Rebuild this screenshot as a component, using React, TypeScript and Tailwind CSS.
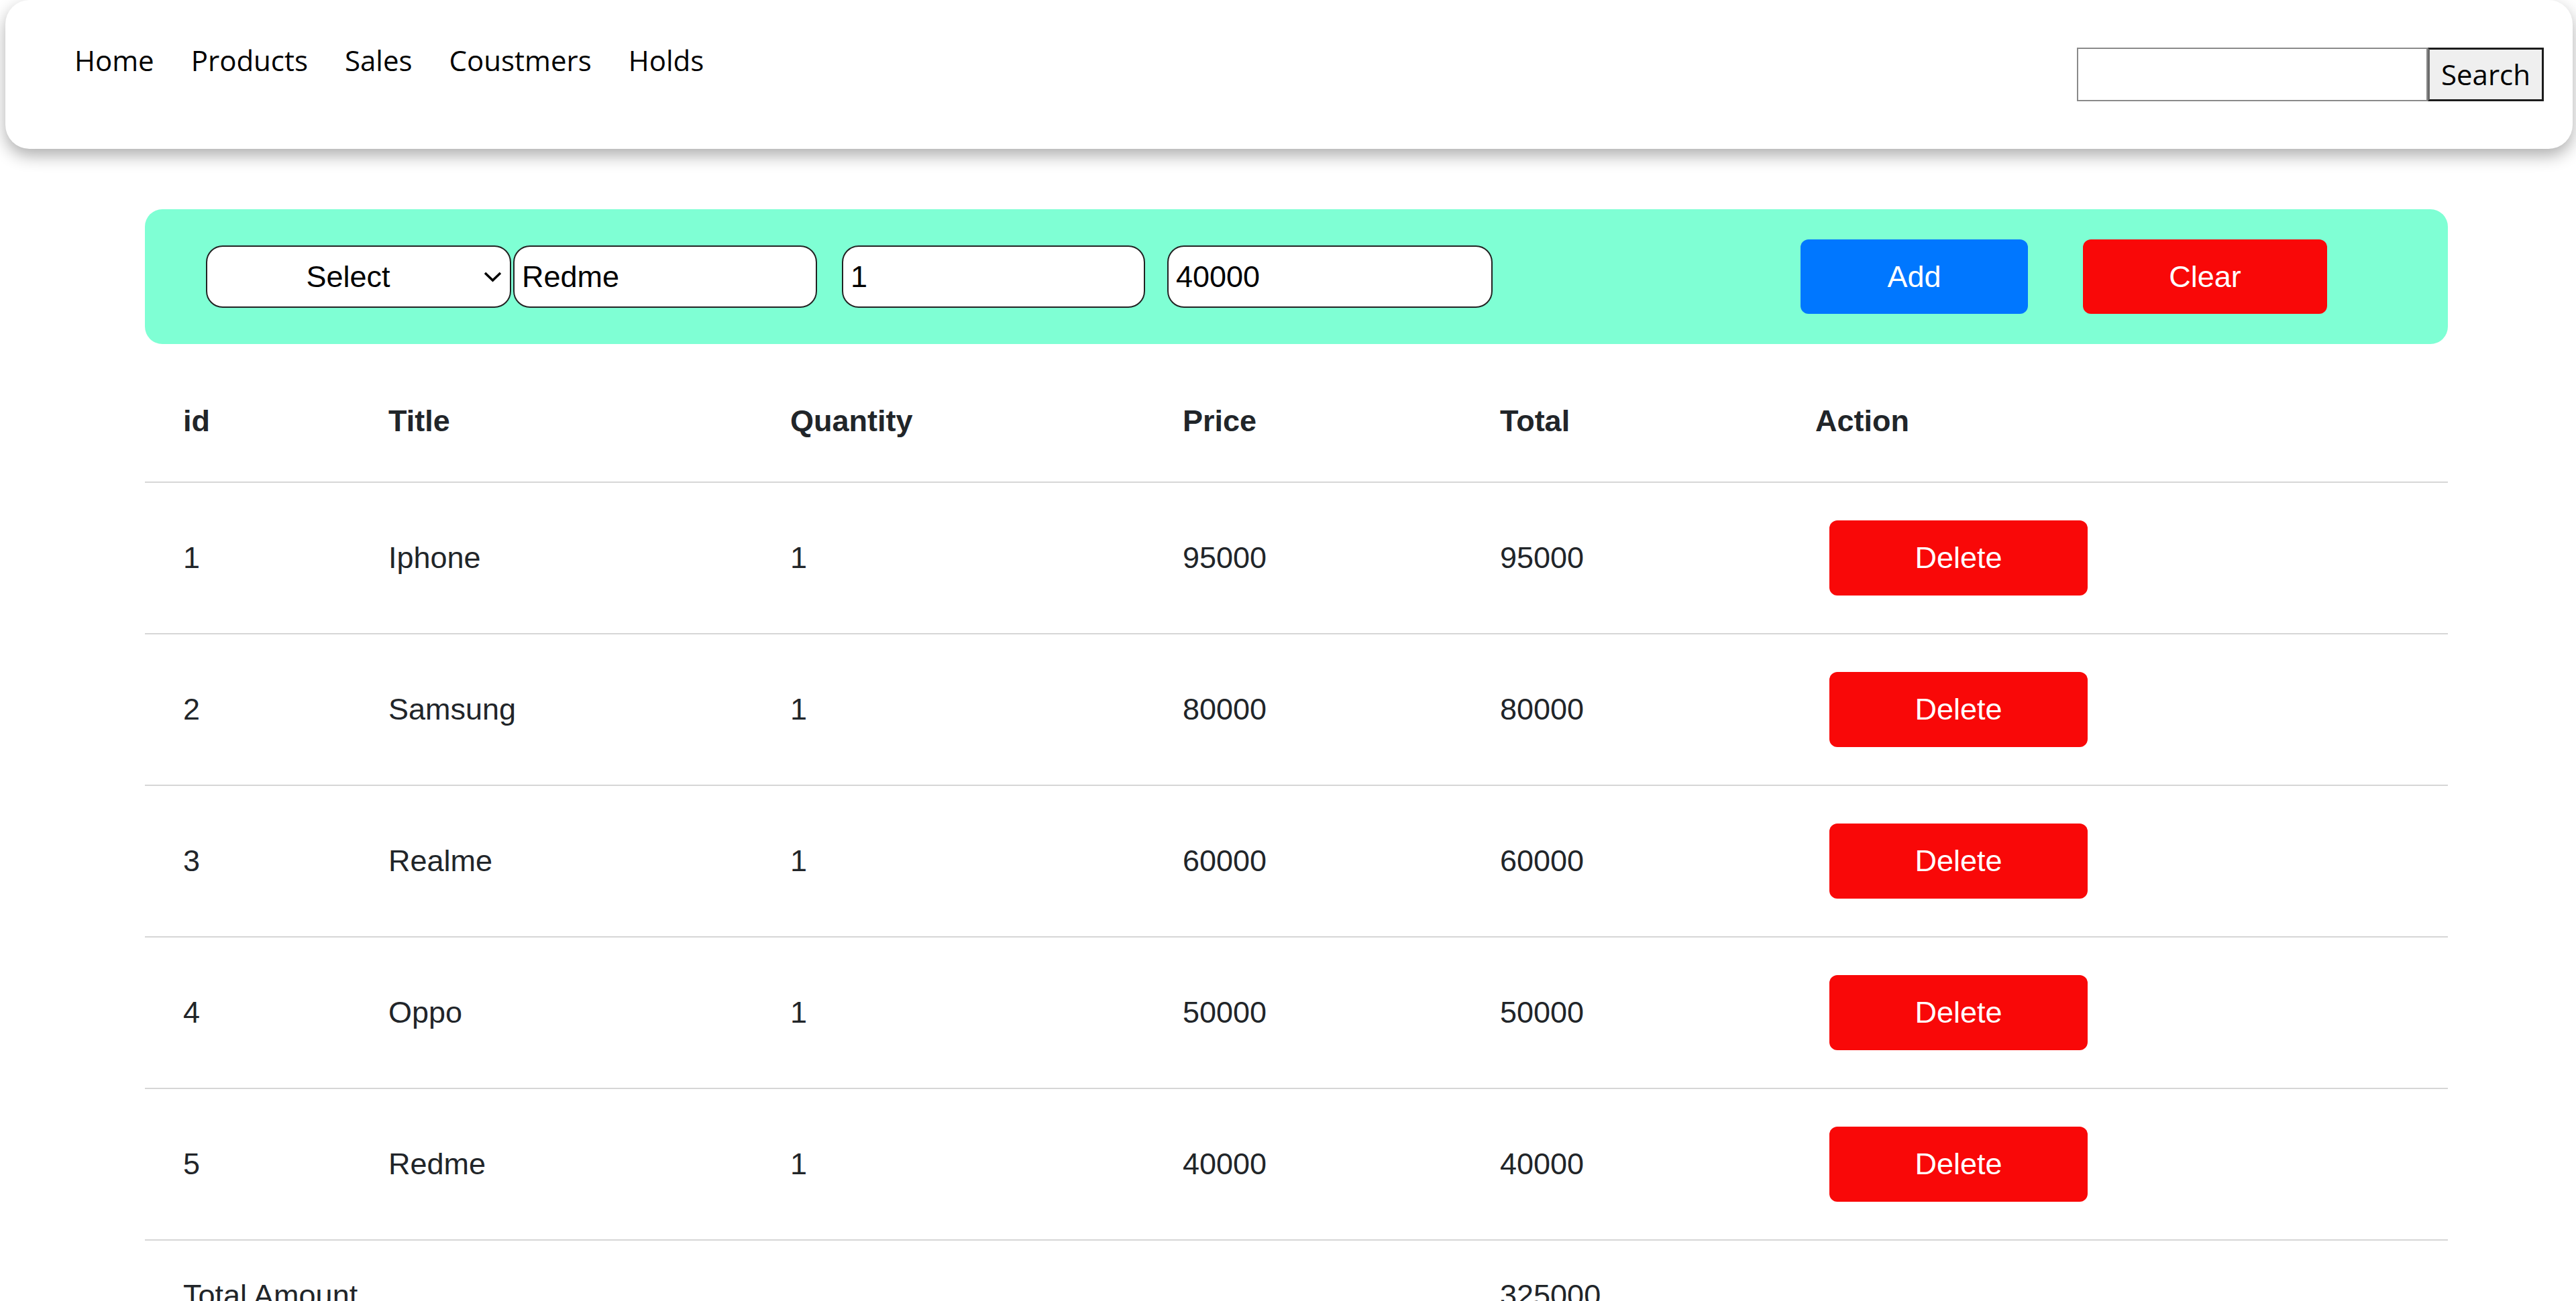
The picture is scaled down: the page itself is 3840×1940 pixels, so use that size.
import React, { useState } from 'react';

type Item = { id: number; title: string; quantity: number; price: number };

const initialItems: Item[] = [
  { id: 1, title: 'Iphone', quantity: 1, price: 95000 },
  { id: 2, title: 'Samsung', quantity: 1, price: 80000 },
  { id: 3, title: 'Realme', quantity: 1, price: 60000 },
  { id: 4, title: 'Oppo', quantity: 1, price: 50000 },
  { id: 5, title: 'Redme', quantity: 1, price: 40000 },
];

const navLinks = ['Home', 'Products', 'Sales', 'Coustmers', 'Holds'];

const App: React.FC = () => {
  const [items, setItems] = useState<Item[]>(initialItems);
  const [title, setTitle] = useState('Redme');
  const [qty, setQty] = useState('1');
  const [price, setPrice] = useState('40000');

  const totalAmount = items.reduce((sum, i) => sum + i.quantity * i.price, 0);

  const addItem = () => {
    const nextId = items.length ? items[items.length - 1].id + 1 : 1;
    setItems([...items, { id: nextId, title, quantity: Number(qty) || 0, price: Number(price) || 0 }]);
  };

  const clearForm = () => {
    setTitle('');
    setQty('');
    setPrice('');
  };

  return (
    <div className="min-h-screen bg-white font-['Liberation_Sans',Arial,sans-serif]">
      {/* Top navigation card */}
      <nav className="ml-[8px] mr-[5px] h-[222px] rounded-[36px] bg-white shadow-[0_10px_24px_rgba(0,0,0,0.32)] flex items-start justify-between pl-[103px] pr-[43px]">
        <ul className="flex gap-[55px] pt-[60px] font-['Open_Sans',sans-serif] text-[42px] leading-[60px] text-black">
          {navLinks.map((link) => (
            <li key={link}>
              <a href="#" className="text-black">
                {link}
              </a>
            </li>
          ))}
        </ul>
        <form className="flex pt-[71px]" onSubmit={(e) => e.preventDefault()}>
          <input
            type="text"
            className="w-[523px] h-[80px] border-2 border-[#8a8a8a] bg-white px-2 text-[40px] outline-none"
          />
          <button
            type="submit"
            className="w-[173px] h-[80px] bg-[#efefef] border-[3px] border-[#1c1c1c] border-l-[#6b6b6b] font-['Open_Sans',sans-serif] text-[42px] leading-none text-black"
          >
            Search
          </button>
        </form>
      </nav>

      <main className="ml-[216px] mr-[191px]">
        {/* Entry form */}
        <div className="mt-[90px] h-[201px] rounded-[26px] bg-[#7fffd4] flex items-center pl-[91px]">
          <div className="w-[455px] h-[93px] flex items-center rounded-[25px] border-2 border-[#222] bg-white">
            <select className="flex-1 h-full appearance-none bg-transparent text-center text-[45px] text-black outline-none pl-[8px]">
              <option>Select</option>
              <option>Iphone</option>
              <option>Samsung</option>
              <option>Realme</option>
              <option>Oppo</option>
              <option>Redme</option>
            </select>
            <svg width="27" height="16" viewBox="0 0 27 16" className="mr-[12px] shrink-0">
              <polyline points="2,2 13.5,13 25,2" fill="none" stroke="#000" strokeWidth="3.5" />
            </svg>
          </div>
          <input
            value={title}
            onChange={(e) => setTitle(e.target.value)}
            className="ml-[3px] w-[453px] h-[93px] rounded-[25px] border-2 border-[#222] bg-white pl-[11px] text-[45px] text-black outline-none"
          />
          <input
            value={qty}
            onChange={(e) => setQty(e.target.value)}
            className="ml-[37px] w-[452px] h-[93px] rounded-[25px] border-2 border-[#222] bg-white pl-[11px] text-[45px] text-black outline-none"
          />
          <input
            value={price}
            onChange={(e) => setPrice(e.target.value)}
            className="ml-[33px] w-[485px] h-[93px] rounded-[25px] border-2 border-[#222] bg-white pl-[11px] text-[45px] text-black outline-none"
          />
          <button
            onClick={addItem}
            className="ml-[459px] w-[339px] h-[111px] rounded-[12px] bg-[#0077ff] text-[45px] text-white"
          >
            Add
          </button>
          <button
            onClick={clearForm}
            className="ml-[82px] w-[364px] h-[111px] rounded-[12px] bg-[#f90808] text-[45px] text-white"
          >
            Clear
          </button>
        </div>

        {/* Items table */}
        <table className="mt-[25px] w-full table-fixed border-collapse text-[45px] text-[#212529]">
          <colgroup>
            <col className="w-[306px]" />
            <col className="w-[599px]" />
            <col className="w-[585px]" />
            <col className="w-[473px]" />
            <col className="w-[470px]" />
            <col />
          </colgroup>
          <thead>
            <tr className="border-b-2 border-[#d6d6d6]">
              {['id', 'Title', 'Quantity', 'Price', 'Total', 'Action'].map((h) => (
                <th key={h} className="px-[57px] py-[64px] text-left font-bold leading-[52px]">
                  {h}
                </th>
              ))}
            </tr>
          </thead>
          <tbody>
            {items.map((item) => (
              <tr key={item.id} className="border-b-2 border-[#d6d6d6]">
                <td className="px-[57px] py-[56px] align-middle leading-[52px]">{item.id}</td>
                <td className="px-[57px] py-[56px] align-middle leading-[52px]">{item.title}</td>
                <td className="px-[57px] py-[56px] align-middle leading-[52px]">{item.quantity}</td>
                <td className="px-[57px] py-[56px] align-middle leading-[52px]">{item.price}</td>
                <td className="px-[57px] py-[56px] align-middle leading-[52px]">{item.quantity * item.price}</td>
                <td className="px-[57px] py-[56px] align-middle">
                  <button
                    onClick={() => setItems(items.filter((i) => i.id !== item.id))}
                    className="ml-[21px] w-[385px] h-[112px] rounded-[12px] bg-[#f90808] text-[45px] text-white align-middle"
                  >
                    Delete
                  </button>
                </td>
              </tr>
            ))}
            <tr>
              <td colSpan={4} className="px-[57px] py-[56px] leading-[52px]">
                Total Amount
              </td>
              <td className="px-[57px] py-[56px] leading-[52px]">{totalAmount}</td>
              <td className="px-[57px] py-[56px]"></td>
            </tr>
          </tbody>
        </table>
      </main>
    </div>
  );
};

export default App;
